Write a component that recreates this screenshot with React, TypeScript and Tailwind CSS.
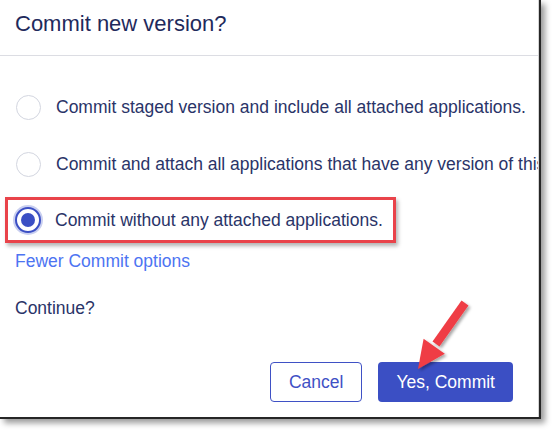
import React from 'react'

function Radio({ checked }: { checked?: boolean }) {
  if (checked) {
    return (
      <span className="flex h-[26px] w-[26px] shrink-0 items-center justify-center rounded-full border-2 border-[#3b4fc4] bg-white shadow-[0_0_0_2px_#c9cff0]">
        <span className="h-[14px] w-[14px] rounded-full bg-[#3b4fc4]" />
      </span>
    )
  }
  return <span className="h-[25px] w-[25px] shrink-0 rounded-full border border-[#d3d6e0] bg-white" />
}

function Arrow() {
  // red annotation arrow pointing at the commit button
  return (
    <svg className="pointer-events-none absolute left-0 top-0" width="556" height="432" viewBox="0 0 556 432">
      <defs>
        <filter id="sh" x="-50%" y="-50%" width="200%" height="200%">
          <feDropShadow dx="2" dy="2" stdDeviation="1.6" floodColor="#000" floodOpacity="0.35" />
        </filter>
      </defs>
      <g filter="url(#sh)" fill="#ef3e45" stroke="none">
        <line x1="465" y1="303" x2="436" y2="344" stroke="#ef3e45" strokeWidth="8.5" />
        <polygon points="418,369 423.6,338.7 444.8,353.7" />
      </g>
    </svg>
  )
}

export default function App() {
  return (
    <div className="relative h-[432px] w-[556px] overflow-hidden bg-white font-['Liberation_Sans',Arial,sans-serif] text-[17.5px] text-[#2a3468]">
      <div className="h-[419px] w-[541px] border-b-2 border-r-2 border-[#262626] bg-white shadow-[4px_4px_6px_rgba(0,0,0,0.4)]">
        <div className="h-full w-full overflow-hidden border-r border-[#d4d4d4]">
          {/* Header */}
          <div className="h-[56px] border-b border-[#dcdde3] pl-[15px] pt-[11px] text-[22px] leading-[26px] text-[#1f2a5c]">
            Commit new version?
          </div>

          {/* Options */}
          <div className="pt-[23px]">
            <div className="flex h-[57px] items-center gap-[15px] whitespace-nowrap pl-[16px]">
              <Radio />
              <span>Commit staged version and include all attached applications.</span>
            </div>
            <div className="flex h-[57px] items-center gap-[15px] whitespace-nowrap pl-[16px]">
              <Radio />
              <span>Commit and attach all applications that have any version of this</span>
            </div>
            <div className="pt-[4px]">
              <div className="ml-[5px] flex h-[46px] w-[391px] items-center gap-[14px] border-[3px] border-[#e9434a] pl-[7px] shadow-[2px_3px_4px_rgba(0,0,0,0.3)]">
                <Radio checked />
                <span className="whitespace-nowrap">Commit without any attached applications.</span>
              </div>
            </div>
            <div className="ml-[15px] mt-[8px] leading-[20px] text-[#4d74f2]">Fewer Commit options</div>
            <div className="ml-[15px] mt-[27px] leading-[20px]">Continue?</div>
          </div>

          {/* Footer */}
          <div className="mt-[44px] flex justify-end gap-[16px] pr-[25px]">
            <button className="h-[40px] rounded-[4px] border-[1.5px] border-[#3f51c5] bg-white px-[18px] text-[#3f51c5]">
              Cancel
            </button>
            <button className="h-[40px] rounded-[4px] bg-[#3b4fc4] px-[18px] text-white">Yes, Commit</button>
          </div>
        </div>
      </div>
      <Arrow />
    </div>
  )
}
